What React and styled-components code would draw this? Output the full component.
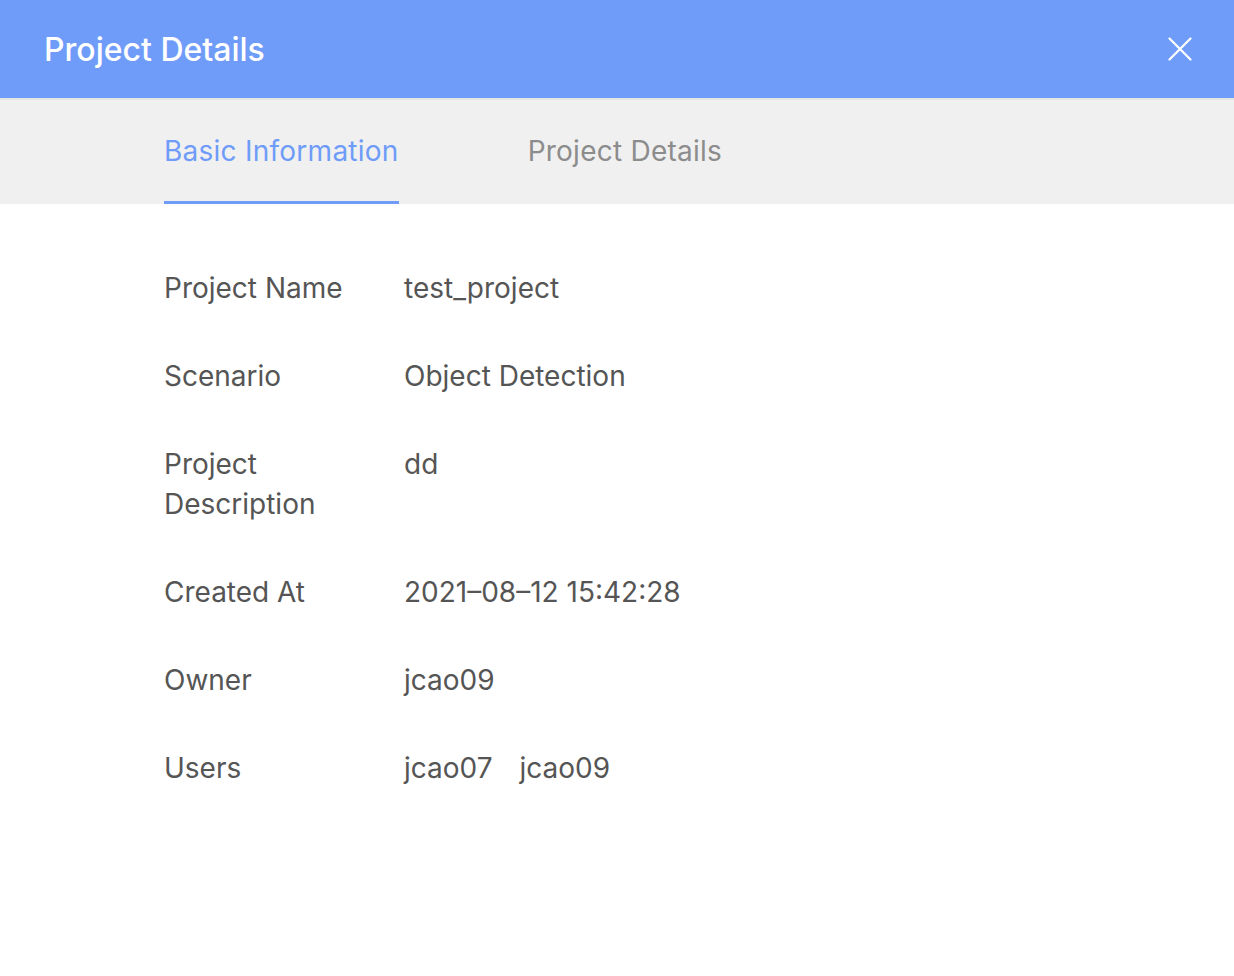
import React, { useState } from 'react'
import styled, { createGlobalStyle } from 'styled-components'

const GlobalStyle = createGlobalStyle`
  html, body {
    margin: 0;
    padding: 0;
    background: #ffffff;
    font-family: Inter, "Liberation Sans", "Noto Sans", sans-serif;
  }
  * { box-sizing: border-box; }
`

const Modal = styled.div`
  width: 1234px;
  height: 976px;
  display: flex;
  flex-direction: column;
  background: #ffffff;
`

const Header = styled.div`
  height: 98px;
  display: flex;
  align-items: center;
  justify-content: space-between;
  padding: 0 42px 0 44px;
  background: #6f9cf8;
  border-bottom: 2px solid #e6e6e6;
  box-sizing: content-box;
`

const Title = styled.h1`
  margin: 0;
  color: #ffffff;
  font-size: 32px;
  font-weight: 500;
`

const CloseButton = styled.button`
  width: 24px;
  height: 24px;
  padding: 0;
  border: none;
  background: transparent;
  cursor: pointer;
  display: flex;
  align-items: center;
  justify-content: center;
`

const TabBar = styled.div`
  height: 104px;
  display: flex;
  gap: 129px;
  padding-left: 164px;
  background: #f0f0f0;
`

const Tab = styled.div`
  display: flex;
  align-items: center;
  font-size: 28px;
  letter-spacing: 0.25px;
  color: ${p => (p.$active ? '#6f9cf8' : '#8c8c8c')};
  border-bottom: 3px solid ${p => (p.$active ? '#6f9cf8' : 'transparent')};
  cursor: pointer;
`

const Body = styled.div`
  display: flex;
  flex-direction: column;
  gap: 48px;
  padding: 64px 0 0 164px;
`

const Row = styled.div`
  display: flex;
  gap: 40px;
  font-size: 28px;
  line-height: 40px;
  color: #555555;
`

const Label = styled.div`
  width: 200px;
  flex-shrink: 0;
`

const Value = styled.div`
  display: flex;
  gap: 27px;
`

const rows = [
  ['Project Name', ['test_project']],
  ['Scenario', ['Object Detection']],
  ['Project Description', ['dd']],
  ['Created At', ['2021\u201308\u201312 15:42:28']],
  ['Owner', ['jcao09']],
  ['Users', ['jcao07', 'jcao09']]
]

export default function App() {
  const [tab, setTab] = useState(0)
  return (
    <Modal>
      <GlobalStyle />
      <Header>
        <Title>Project Details</Title>
        <CloseButton aria-label="close">
          <svg width="24" height="24" viewBox="0 0 24 24">
            <path d="M1.5 1.5 L22.5 22.5 M22.5 1.5 L1.5 22.5" stroke="#ffffff" strokeWidth="2.2" strokeLinecap="round" />
          </svg>
        </CloseButton>
      </Header>
      <TabBar>
        <Tab $active={tab === 0} onClick={() => setTab(0)}>Basic Information</Tab>
        <Tab $active={tab === 1} onClick={() => setTab(1)}>Project Details</Tab>
      </TabBar>
      <Body>
        {rows.map(([label, values]) => (
          <Row key={label}>
            <Label>{label}</Label>
            <Value>
              {values.map(v => (
                <span key={v}>{v}</span>
              ))}
            </Value>
          </Row>
        ))}
      </Body>
    </Modal>
  )
}
